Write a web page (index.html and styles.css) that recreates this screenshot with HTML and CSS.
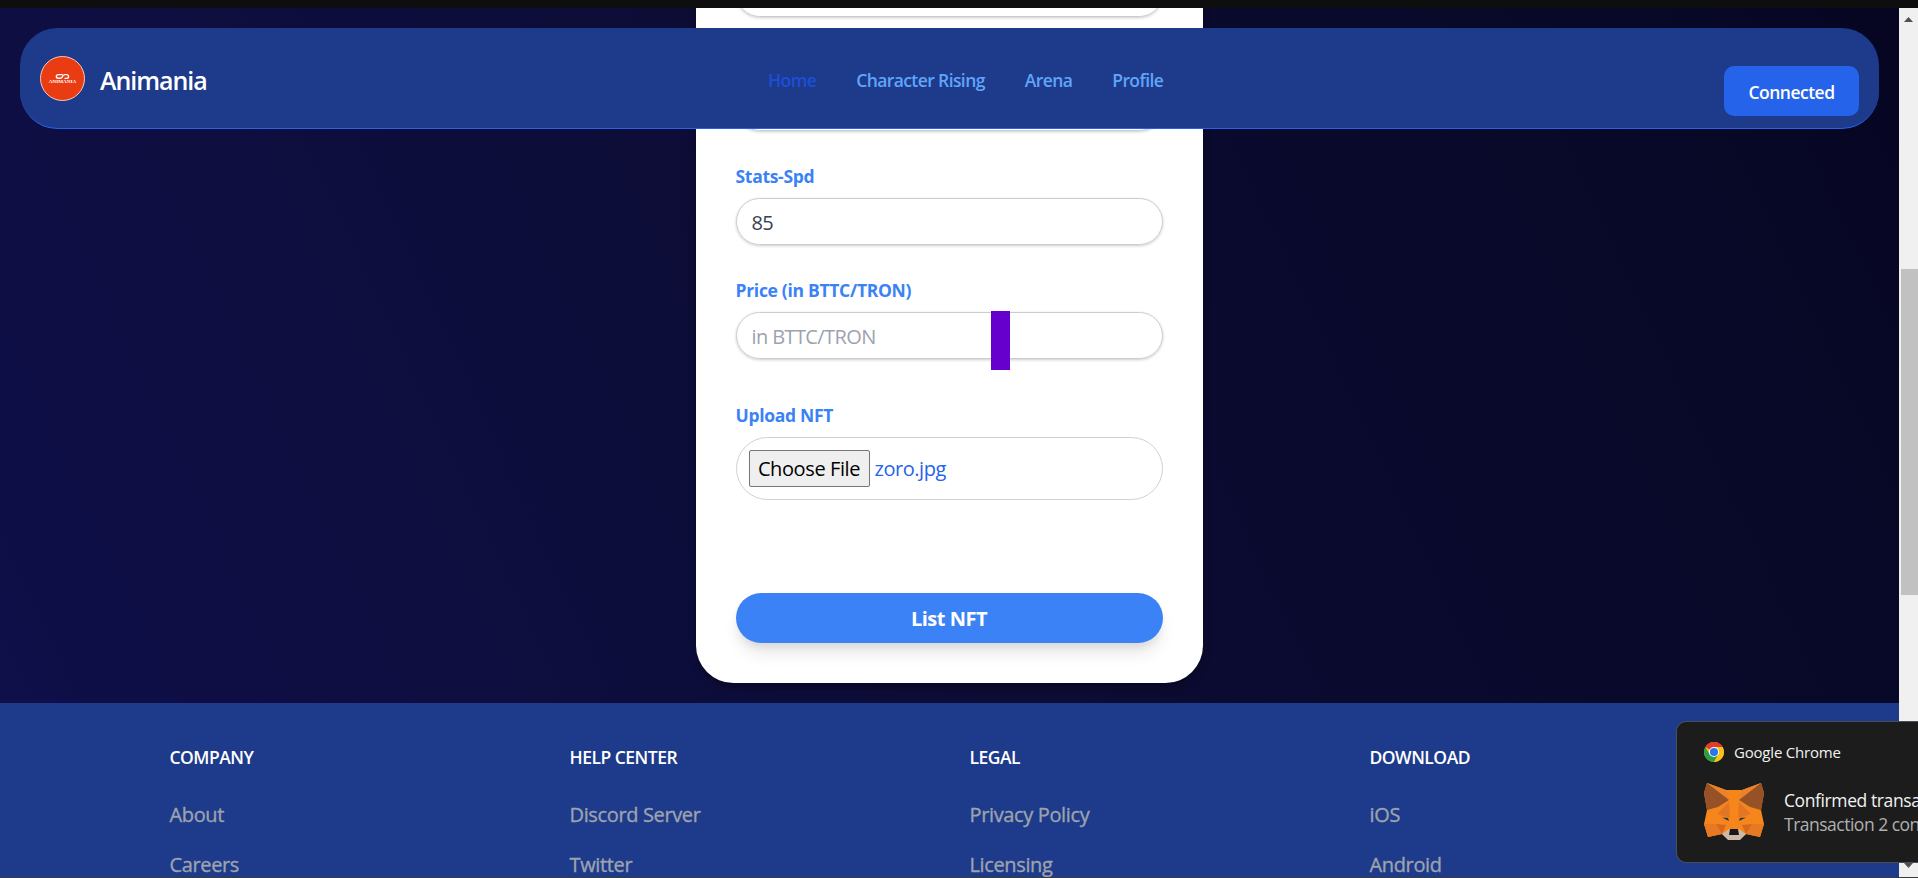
FILE: index.html
```html
<!DOCTYPE html>
<html lang="en">
<head>
<meta charset="utf-8">
<title>Animania</title>
<link rel="stylesheet" href="styles.css">
</head>
<body>
<div class="topbar"></div>
<div class="window">
  <div class="page">
    <nav class="navbar">
      <div class="brand">
        <svg class="logo" viewBox="0 0 45 45">
          <circle cx="22.5" cy="22.5" r="22" fill="#ea3c12" stroke="#f6c9bb" stroke-width="1"/>
          <path d="M22.6 18.6H18.6Q16.3 18.6 16.3 20.4T18.6 22.2H20.6Q22 22.2 22.4 20.6T24.6 18.6H26.4Q28.6 18.6 28.6 20.4T26.4 22.4H24.4" fill="none" stroke="#fff" stroke-width="1.4"/>
          <text x="8.8" y="27.4" textLength="27.5" lengthAdjust="spacingAndGlyphs" class="logo-text">ANIMANIA</text>
        </svg>
        <span class="brand-name">Animania</span>
      </div>
      <div class="links">
        <a class="link active">Home</a>
        <a class="link">Character Rising</a>
        <a class="link">Arena</a>
        <a class="link">Profile</a>
      </div>
      <button class="connected">Connected</button>
    </nav>
    <main class="content">
      <form class="card">
        <div class="input"></div>
        <div class="field"><div class="label"></div><div class="input"></div></div>
        <div class="field"><div class="label">Stats-Spd</div><div class="input">85</div></div>
        <div class="field"><div class="label">Price (in BTTC/TRON)</div><div class="input placeholder">in BTTC/TRON<span class="marker"></span></div></div>
        <div class="field upload"><div class="label">Upload NFT</div>
          <div class="file"><span class="choose">Choose File</span><span class="filename">zoro.jpg</span></div></div>
        <div class="submit">List NFT</div>
      </form>
    </main>
    <footer class="footer">
      <div class="col"><h2>COMPANY</h2><a>About</a><a>Careers</a></div>
      <div class="col"><h2>HELP CENTER</h2><a>Discord Server</a><a>Twitter</a></div>
      <div class="col"><h2>LEGAL</h2><a>Privacy Policy</a><a>Licensing</a></div>
      <div class="col"><h2>DOWNLOAD</h2><a>iOS</a><a>Android</a></div>
    </footer>
  </div>
  <div class="scrollbar">
    <svg viewBox="0 0 9 5" class="arrow"><path d="M0 5L4.5 0L9 5Z" fill="#505050"/></svg>
    <div class="thumb"></div>
    <svg viewBox="0 0 9 5" class="arrow"><path d="M0 0L4.5 5L9 0Z" fill="#505050"/></svg>
  </div>
</div>
<aside class="toast">
  <div class="toast-head">
    <svg viewBox="0 0 20 20" class="chrome">
      <circle cx="10" cy="10" r="10" fill="#fbc116"/>
      <path d="M10 10L1.34 5A10 10 0 0 1 18.66 5L10 5Z" fill="#e33b2e"/>
      <path d="M1.34 5A10 10 0 0 0 10 20L14.33 12.5L10 10L5.67 12.5Z" fill="#2a9e47"/>
      <path d="M18.66 5H10V10L14.33 12.5L10 20A10 10 0 0 0 18.66 5Z" fill="#fbc116"/>
      <circle cx="10" cy="10" r="5.1" fill="#fff"/><circle cx="10" cy="10" r="4.1" fill="#2d76e8"/>
    </svg>
    <span>Google Chrome</span>
  </div>
  <div class="toast-body">
    <svg viewBox="0 0 60 57" class="fox">
      <path d="M3 0L22 7H38L57 0L60 10L57 27L60 41L56 54L42 51L36 56H24L18 51L4 54L0 41L3 27L0 10Z" fill="#f6851b"/>
      <path d="M3 0L22 7L25 17Z M57 0L38 7L35 17Z" fill="#e8832b"/>
      <path d="M0 41L12 41L18 51L4 54Z M60 41L48 41L42 51L56 54Z" fill="#e87924"/>
      <path d="M3 0L25 17L14 24L3 27L0 10Z" fill="#965126"/>
      <path d="M57 0L35 17L46 24L57 27L60 10Z" fill="#965126"/>
      <path d="M25 19L26 35L13 31Z M35 19L34 35L47 31Z" fill="#e27625"/>
      <path d="M12 41L22 42L18 51Z M48 41L38 42L42 51Z" fill="#d5671f"/>
      <path d="M18 34.5L24 35L25 38Z M42 34.5L36 35L35 38Z" fill="#233447"/>
      <path d="M18 51L25 46H35L42 51L36 57H24Z" fill="#cdb9a8"/>
      <path d="M26 46H34L35 52H25Z" fill="#191919"/>
    </svg>
    <div class="toast-text"><div class="toast-title">Confirmed transa</div><div class="toast-sub">Transaction 2 con</div></div>
  </div>
</aside>
</body>
</html>
```
FILE: styles.css
```css
* { box-sizing: border-box; }
html, body { margin: 0; height: 100%; overflow: hidden; }
body { font-family: "Open Sans", "Noto Sans", sans-serif; background: #3c3c3c; position: relative; }
.topbar { height: 8px; background: #0e0e0e; }
.window { display: flex; height: 869px; }
.page { position: relative; flex: 1; display: flex; flex-direction: column; overflow: hidden; background: linear-gradient(65deg, #0f0f4b 0%, #0c0c34 50%, #060623 100%); }
.navbar { position: absolute; z-index: 2; left: 20px; right: 20px; top: 20px; height: 101px; padding: 0 20px; border-radius: 37.5px; background: #1e3a8a; border-bottom: 1px solid #2563eb; display: grid; grid-template-columns: 728px 1fr auto; align-items: center; }
.brand { display: flex; align-items: center; gap: 15px; padding-top: 1px; }
.logo { width: 45px; height: 45px; }
.logo-text { font: bold 5px "Liberation Serif", serif; fill: #fff; }
.brand-name { color: #fff; font-size: 25px; font-weight: 600; letter-spacing: -1.05px; padding-top: 2px; }
.links { display: flex; gap: 40px; padding-top: 3px; }
.link { font-size: 17.5px; font-weight: 600; letter-spacing: -.6px; color: #60a5fa; white-space: nowrap; }
.active { color: #1d4ed8; }
.connected { align-self: start; margin-top: 38px; width: 135px; height: 50px; padding: 1px 0 0; border: 0; border-radius: 10px; background: #2563eb; color: #fff; font: 600 17.5px "Open Sans", sans-serif; letter-spacing: -.5px; }
.content { height: 695px; flex: none; display: flex; justify-content: center; align-items: flex-end; padding-bottom: 20px; }
.card { width: 507px; padding: 40px; margin-right: 1px; background: #fff; border-radius: 37.5px; box-shadow: 0 5px 8px rgba(0,0,0,.3); }
.field { display: flex; flex-direction: column; }
.label { height: 25px; margin: 32px 0 10px; line-height: 27px; color: #3b82f6; font-size: 17.5px; font-weight: 700; letter-spacing: -.3px; }
.input { position: relative; height: 47px; border: 1px solid #ccc; border-radius: 24px; padding: 0 15px; line-height: 47px; font-size: 20px; letter-spacing: -.8px; color: #374151; box-shadow: 0 1px 3px rgba(0,0,0,.2); }
.placeholder { color: #9ca3af; letter-spacing: -.6px; }
.marker { position: absolute; left: 254px; top: -2px; width: 19px; height: 59px; background: #60c; }
.upload .label { margin-top: 43px; }
.file { height: 63px; border: 1px solid #d1d1d1; border-radius: 32px; padding: 0 12px; display: flex; align-items: center; gap: 5px; font-size: 20px; }
.choose { width: 121px; height: 37px; border: 1px solid #767676; border-radius: 2px; background: #efefef; color: #000; line-height: 35px; text-align: center; letter-spacing: -.4px; }
.filename { color: #2563eb; letter-spacing: -.45px; }
.submit { margin-top: 93px; height: 50px; border-radius: 25px; background: #3b82f6; color: #fff; font-size: 20px; font-weight: 700; line-height: 51px; text-align: center; letter-spacing: -.5px; box-shadow: 0 12px 18px -4px rgba(0,0,0,.12), 0 5px 8px -2px rgba(0,0,0,.07); }
.footer { flex: 1; background: #1e3a8a; display: grid; grid-template-columns: repeat(4, 400px); padding: 40px 0 0 169.5px; }
.col { display: flex; flex-direction: column; }
.col h2 { margin: 0 0 30px; font-size: 17.5px; line-height: 28px; font-weight: 600; color: #fff; letter-spacing: -.5px; }
.col a { height: 30px; margin-bottom: 20px; line-height: 30px; font-size: 20px; -webkit-text-stroke: .35px #9ca3af; color: #9ca3af; letter-spacing: -.36px; }
.col h2 { height: 27px; }
.scrollbar { width: 19px; background: #f0f0f0; display: flex; flex-direction: column; align-items: center; padding: 9px 0; }
.arrow { width: 9px; height: 5px; flex: none; }
.thumb { align-self: flex-end; width: 17px; height: 326px; margin: 247px 0 auto; background: #c1c1c1; }
.toast { position: absolute; left: 1676px; top: 721px; width: 242px; height: 142px; border: 1px solid #4a4e5a; border-right: 0; border-radius: 10px 0 0 10px; background: #1c1c1c; padding: 20px 0 20px 27px; color: #f2f2f2; }
.toast-head { display: flex; align-items: center; gap: 10px; height: 20px; font-size: 15px; letter-spacing: -.2px; }
.chrome { width: 20px; height: 20px; }
.toast-body { display: flex; gap: 20px; margin-top: 21px; white-space: nowrap; }
.fox { width: 60px; height: 57px; flex: none; }
.toast-text { padding-top: 5px; font-size: 17.5px; line-height: 24px; letter-spacing: -.4px; }
.toast-sub { color: #b0b0b0; letter-spacing: -.5px; }
```
